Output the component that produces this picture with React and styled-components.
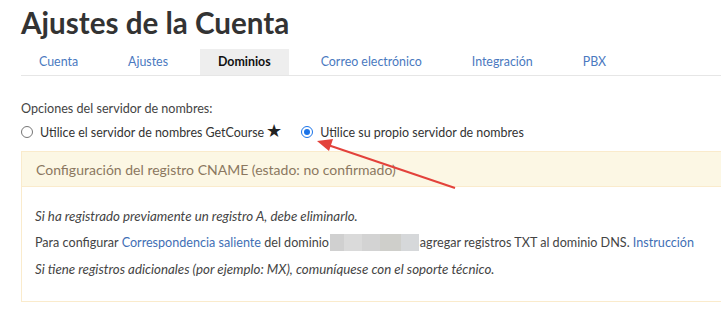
import styled, { createGlobalStyle } from 'styled-components';

const GlobalStyle = createGlobalStyle`
  * { margin: 0; padding: 0; box-sizing: border-box; }
  html, body { background: #fff; overflow: hidden; }
  body { font-family: Lato, "Liberation Sans", sans-serif; color: #333; }
`;

const Page = styled.div`
  position: relative;
  width: 760px;
  padding: 6px 0 0 21px;
`;

const Title = styled.h1`
  font-size: 29.6px;
  font-weight: 700;
  line-height: 34px;
  color: #333;
`;

const Tabs = styled.ul`
  display: flex;
  list-style: none;
  gap: 14px;
  margin-top: 9px;
  border-bottom: 1px solid #e6e6e6;
`;

const Tab = styled.li`
  padding: 0 18px;
  height: 26px;
  line-height: 26px;
  font-size: 12.4px;
  color: ${(p) => (p.$active ? '#111' : '#4a79c0')};
  font-weight: ${(p) => (p.$active ? 700 : 400)};
  background: ${(p) => (p.$active ? '#eeeeee' : 'transparent')};
`;

const Label = styled.div`
  margin-top: 25px;
  font-size: 12.6px;
  color: #444;
`;

const RadioRow = styled.div`
  display: flex;
  align-items: center;
  margin-top: 8px;
  font-size: 12.45px;
  color: #333;
`;

const Radio = styled.label`
  display: flex;
  align-items: center;
  gap: 7px;
  margin-right: 19px;
`;

const Dot = styled.span`
  width: 12px;
  height: 12px;
  border-radius: 50%;
  border: 1px solid ${(p) => (p.$checked ? '#1a73e8' : '#767676')};
  display: flex;
  align-items: center;
  justify-content: center;
  &::after {
    content: '';
    width: 6px;
    height: 6px;
    border-radius: 50%;
    background: ${(p) => (p.$checked ? '#1a73e8' : 'transparent')};
  }
`;

const Star = styled.span`
  font-size: 18px;
  line-height: 12px;
  color: #222;
  margin-left: 2px;
`;

const Panel = styled.section`
  margin-top: 11px;
  border: 1px solid #faebcc;
  border-right: none;
`;

const PanelHead = styled.div`
  background: #fcf7e4;
  border-bottom: 1px solid #faebcc;
  height: 35px;
  padding: 0 14px;
  display: flex;
  align-items: center;
  font-size: 14px;
  color: #8b7760;
`;

const PanelBody = styled.div`
  padding: 21px 13px 24px;
  display: flex;
  flex-direction: column;
  gap: 10px;
  line-height: 16px;
  color: #444;
`;

const Line = styled.p`
  font-style: ${(p) => (p.$italic ? 'italic' : 'normal')};
  font-size: ${(p) => (p.$italic ? '13.3px' : '12.6px')};
  display: flex;
  align-items: center;
  white-space: pre;
`;

const Link = styled.a`
  color: #3f6fb5;
  text-decoration: none;
`;

const Blur = styled.span`
  display: inline-block;
  width: 89px;
  height: 17px;
  margin: 0 1px 0 1px;
  background: linear-gradient(90deg, #d0d0d0 0 16%, #dadada 16% 36%, #d3d3d3 36% 56%, #cfcfcb 56% 80%, #d6d8da 80% 100%);
`;

const Arrow = styled.svg`
  position: absolute;
  left: 0;
  top: 0;
  pointer-events: none;
`;

export default function App() {
  const tabs = ['Cuenta', 'Ajustes', 'Dominios', 'Correo electrónico', 'Integración', 'PBX'];

  return (
    <>
      <GlobalStyle />
      <Page>
        <Title>Ajustes de la Cuenta</Title>
        <Tabs>
          {tabs.map((t) => (
            <Tab key={t} $active={t === 'Dominios'}>{t}</Tab>
          ))}
        </Tabs>
        <Label>Opciones del servidor de nombres:</Label>
        <RadioRow>
          <Radio>
            <Dot />
            <span>Utilice el servidor de nombres GetCourse<Star>★</Star></span>
          </Radio>
          <Radio>
            <Dot $checked />
            <span>Utilice su propio servidor de nombres</span>
          </Radio>
        </RadioRow>
        <Panel>
          <PanelHead>Configuración del registro CNAME (estado: no confirmado)</PanelHead>
          <PanelBody>
            <Line $italic>Si ha registrado previamente un registro A, debe eliminarlo.</Line>
            <Line>
              {'Para configurar '}<Link>Correspondencia saliente</Link>{' del dominio'}
              <Blur />
              {'agregar registros TXT al dominio DNS. '}<Link>Instrucción</Link>
            </Line>
            <Line $italic>Si tiene registros adicionales (por ejemplo: MX), comuníquese con el soporte técnico.</Line>
          </PanelBody>
        </Panel>
        <Arrow width="721" height="318" viewBox="0 0 721 318">
          <line x1="455" y1="188" x2="328" y2="145" stroke="#e3423b" strokeWidth="2" />
          <polygon points="317,141 333,139 329,151" fill="#e3423b" />
        </Arrow>
      </Page>
    </>
  );
}
